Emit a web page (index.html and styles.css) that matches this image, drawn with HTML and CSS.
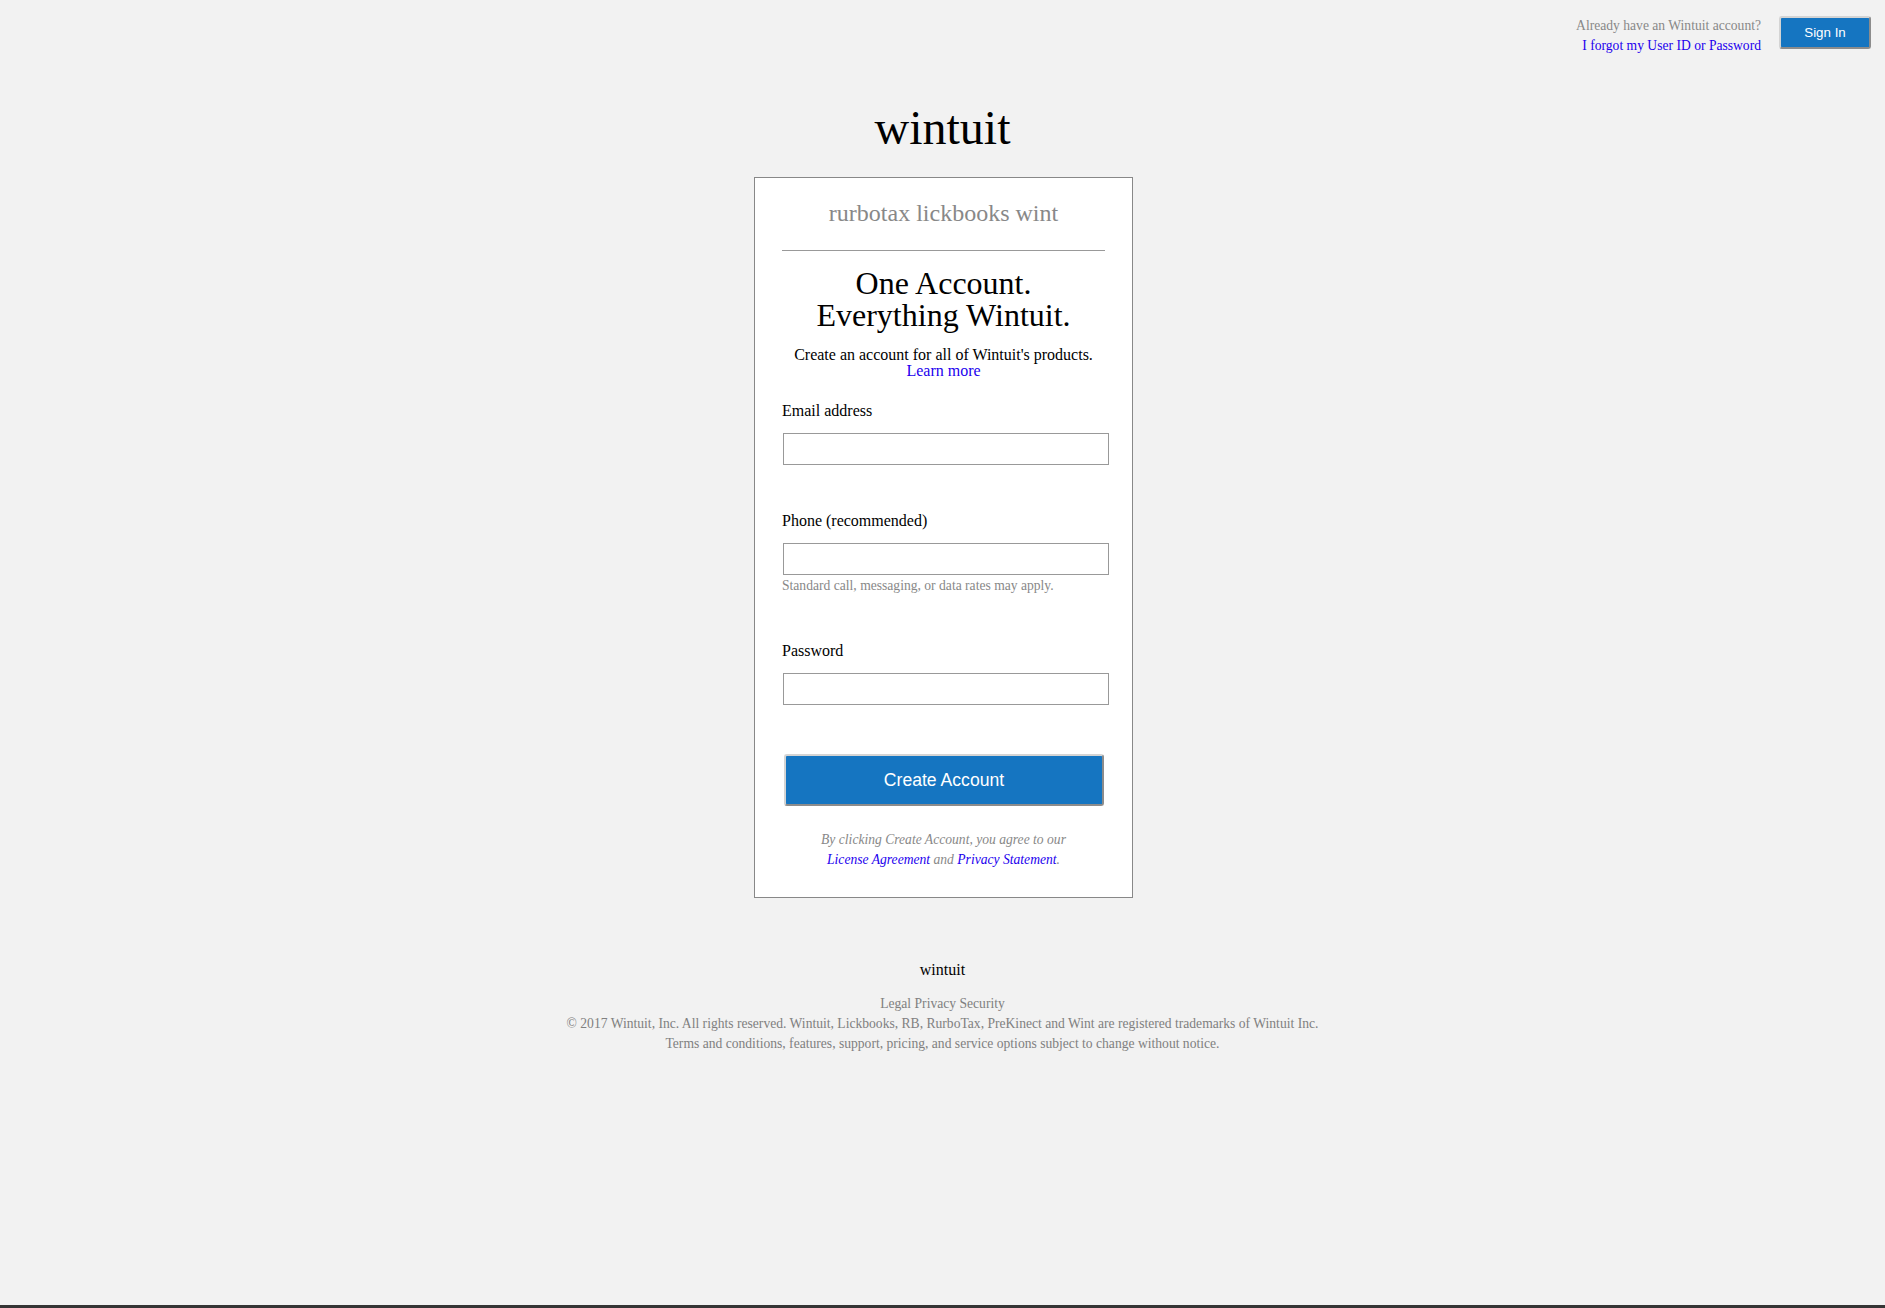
FILE: index.html
```html
<!DOCTYPE html>
<html lang="en">
<head>
<meta charset="utf-8">
<title>Wintuit - Create Account</title>
<link rel="stylesheet" href="styles.css">
</head>
<body>
<div class="page">
  <header class="topbar">
    <div class="signin-text">
      <div class="muted">Already have an Wintuit account?</div>
      <a href="#" class="link">I forgot my User ID or Password</a>
    </div>
    <button class="btn signin-btn" type="button">Sign In</button>
  </header>

  <h1 class="brand">wintuit</h1>

  <main class="card">
    <div class="products">rurbotax lickbooks wint</div>
    <div class="divider"></div>
    <h2 class="headline">One Account.<br>Everything Wintuit.</h2>
    <p class="intro">Create an account for all of Wintuit's products.<br><a href="#" class="link">Learn more</a></p>

    <form class="form">
      <div class="field">
        <label class="label" for="email">Email address</label>
        <input class="input" id="email" type="text">
      </div>
      <div class="field">
        <label class="label" for="phone">Phone (recommended)</label>
        <input class="input" id="phone" type="text">
        <div class="help">Standard call, messaging, or data rates may apply.</div>
      </div>
      <div class="field">
        <label class="label" for="pw">Password</label>
        <input class="input" id="pw" type="password">
      </div>
      <button class="btn create-btn" type="button">Create Account</button>
    </form>

    <p class="legal">By clicking Create Account, you agree to our<br><a href="#" class="link">License Agreement</a> and <a href="#" class="link">Privacy Statement</a>.</p>
  </main>

  <footer class="footer">
    <div class="footer-brand">wintuit</div>
    <div class="footer-lines">
      <div>Legal Privacy Security</div>
      <div>© 2017 Wintuit, Inc. All rights reserved. Wintuit, Lickbooks, RB, RurboTax, PreKinect and Wint are registered trademarks of Wintuit Inc.</div>
      <div>Terms and conditions, features, support, pricing, and service options subject to change without notice.</div>
    </div>
  </footer>
</div>
</body>
</html>
```

FILE: styles.css
```css
* {
  box-sizing: border-box;
}

html, body {
  margin: 0;
  padding: 0;
  background: #f2f2f2;
}

body {
  font-family: "Liberation Serif", "Times New Roman", serif;
  color: #000;
}

.page {
  min-height: 100vh;
  border-bottom: 3px solid #353535;
  display: flex;
  flex-direction: column;
  align-items: center;
}

.link {
  color: #2200ee;
  text-decoration: none;
}

.muted {
  color: #888;
}

.topbar {
  align-self: stretch;
  display: flex;
  justify-content: flex-end;
  align-items: flex-start;
  gap: 18px;
  padding: 16px 14px 0 0;
}

.signin-text {
  font-size: 13.6px;
  line-height: 20px;
  text-align: right;
}

.signin-text .link {
  display: block;
}

.btn {
  font-family: "Liberation Sans", Arial, sans-serif;
  color: #fff;
  background: #1575c1;
  border-style: solid;
  border-width: 2px;
  border-color: #d4d4d4 #8c8c8c #8c8c8c #d4d4d4;
  border-radius: 3px;
  cursor: pointer;
}

.signin-btn {
  width: 92px;
  height: 33px;
  font-size: 13.333px;
  padding: 0;
}

.brand {
  margin: 48px 0 0;
  font-size: 48px;
  line-height: 48px;
  font-weight: normal;
}

.card {
  margin: 25px 0 0 2px;
  width: 379px;
  background: #fff;
  border: 1px solid #888;
  padding: 23px 27px 27px;
  text-align: center;
}

.products {
  font-size: 24px;
  line-height: 24px;
  color: #888;
}

.divider {
  margin-top: 25px;
  height: 1px;
  background: #999;
}

.headline {
  margin: 16px 0 0;
  font-size: 32px;
  line-height: 32px;
  font-weight: normal;
}

.intro {
  margin: 16px 0 0;
  font-size: 16px;
  line-height: 16px;
}

.form {
  text-align: left;
}

.field {
  display: flex;
  flex-direction: column;
  margin-top: 48px;
}

.field:first-child {
  margin-top: 24px;
}

.label {
  font-size: 16px;
  line-height: 16px;
}

.input {
  margin: 14px 0 0 1px;
  width: 326px;
  height: 32px;
  border: 1px solid #999;
  background: #fff;
  font-size: 16px;
  padding: 0 6px;
}

.help {
  margin-top: 2px;
  font-size: 13.6px;
  line-height: 18px;
  color: #888;
}

.create-btn {
  display: block;
  margin: 49px 0 0 2px;
  width: 320px;
  height: 52px;
  font-size: 17.6px;
  padding: 0;
}

.legal {
  margin: 24px 0 0;
  font-size: 13.6px;
  line-height: 20px;
  font-style: italic;
  color: #888;
}

.footer {
  margin-top: 64px;
  text-align: center;
}

.footer-brand {
  font-size: 16px;
  line-height: 16px;
}

.footer-lines {
  margin-top: 16px;
  font-size: 13.6px;
  line-height: 20px;
  color: #808080;
}
```
